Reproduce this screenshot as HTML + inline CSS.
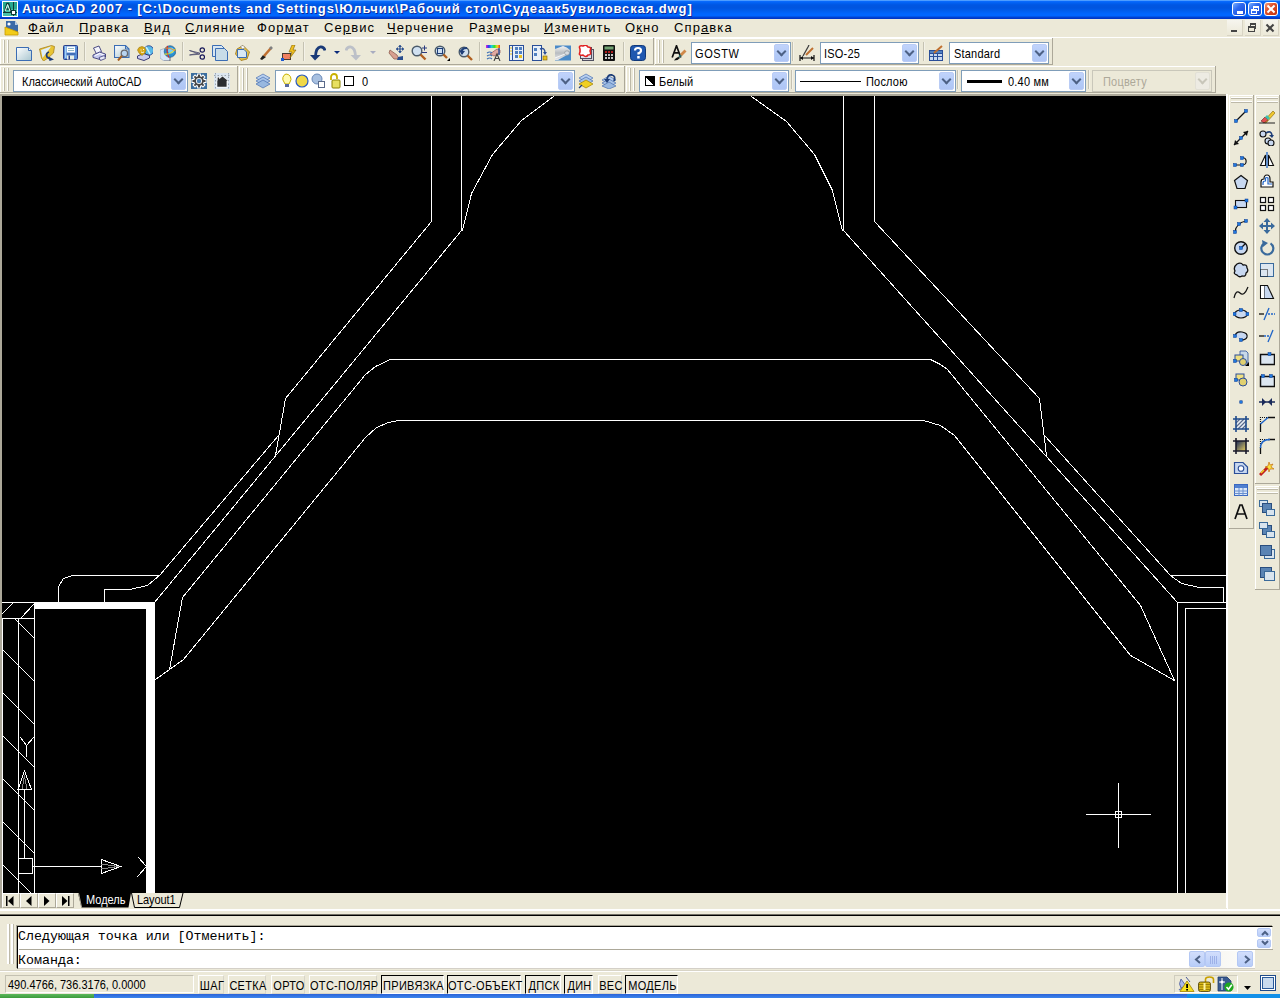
<!DOCTYPE html><html><head><meta charset="utf-8"><style>
*{margin:0;padding:0;box-sizing:border-box}
html,body{width:1280px;height:998px;overflow:hidden;background:#ECE9D8;font-family:"Liberation Sans",sans-serif;font-size:11px;color:#000}
.a{position:absolute}
#title{left:0;top:0;width:1280px;height:19px;background:linear-gradient(#4C9CFF 0,#4C9CFF 1px,#0A6CFF 1px,#0060F2 3px,#0056E2 5px,#0055E0 8px,#005EEE 11px,#0066FF 14px,#0066FF 16px,#0046D6 17px,#0032C2 19px)}
#title .t{left:22px;top:1px;color:#fff;font-weight:bold;font-size:13px;letter-spacing:0.9px;text-shadow:1px 1px 0 #0A2A9C;white-space:nowrap}
.tb{position:absolute;top:2px;width:14px;height:14px;border:1px solid #fff;border-radius:3px;background:linear-gradient(135deg,#7AB0FF 0,#2E6AF0 40%,#1248D8 100%)}
.menu{position:absolute;top:21px;font-size:13px;letter-spacing:1.1px;white-space:nowrap;line-height:13px}
.menu u{text-decoration:underline;text-decoration-thickness:1px;text-underline-offset:1px}
.grip{position:absolute;width:2px;background:#fff;border-right:1px solid #BDB9A8}
.tbar{position:absolute;background:#ECE9D8;border-right:1px solid #ACA899;border-bottom:1px solid #ACA899;box-shadow:inset 1px 1px 0 #fff}
.combo{position:absolute;background:#fff;border:1px solid #7F9DB9;height:22px;white-space:nowrap;overflow:hidden}
.dd{position:absolute;right:1px;top:1px;width:15px;height:18px;border-radius:2px;background:linear-gradient(#C1D3FB,#B2CAF7 60%,#AFC5F5);border:1px solid #B9CCF5}
.dd.dis:after{border-color:#C8C6BA}
.dd:after{content:"";position:absolute;left:3px;top:3px;width:5px;height:5px;border-right:2px solid #4D6185;border-bottom:2px solid #4D6185;transform:rotate(45deg)}
.combo .tx{position:absolute;left:5px;top:4px;font-size:11px;letter-spacing:0.2px;transform:scaleY(1.12);transform-origin:0 0}
.sep{position:absolute;width:2px;border-left:1px solid #C5C2B2;border-right:1px solid #F4F2E8}
.ic{position:absolute;width:16px;height:16px;overflow:visible}
.st{position:absolute;top:976px;height:18px;font-size:12px;line-height:17px;padding:0 2px;white-space:nowrap;letter-spacing:0.1px}
.st.dn{border-top:1px solid #ACA899;border-left:1px solid #ACA899;border-right:1px solid #fff;border-bottom:1px solid #fff;box-shadow:inset 1px 1px 0 #716F64}
</style></head><body>
<div id="title" class="a"><div class="a t">AutoCAD 2007 - [C:\Documents and Settings\Юльчик\Рабочий стол\Судеаак5увиловская.dwg]</div></div>
<svg class="a" style="left:2px;top:1px" width="16" height="16" viewBox="0 0 16 16">
<rect x="0" y="0" width="16" height="16" fill="#fff"/><rect x="1" y="1" width="14" height="14" fill="#28A890"/>
<rect x="1" y="8" width="14" height="7" fill="#48C0A8"/>
<path d="M2.5 11 L5 2.5 L6.5 2.5 L9 11 M3.5 8 H8" stroke="#0E3A34" stroke-width="1.4" fill="none"/><path d="M3.2 10 L5.6 3.5 L8 10" stroke="#E8FFF8" stroke-width="1" fill="none"/>
<path d="M11.5 1 V15 M1 11.5 H15" stroke="#0E3A34" stroke-width="1"/>
<rect x="9.5" y="9.5" width="4" height="4" fill="#fff" stroke="#0E3A34" stroke-width="1"/></svg>
<div class="tb" style="left:1232px"><div class="a" style="left:4px;top:8px;width:6px;height:3px;background:#fff"></div></div>
<div class="tb" style="left:1248px"><div class="a" style="left:4px;top:3px;width:6px;height:5px;border:1px solid #fff;border-top-width:2px"></div><div class="a" style="left:2px;top:6px;width:6px;height:5px;border:1px solid #fff;border-top-width:2px;background:#2E6AF0"></div></div>
<div class="tb" style="left:1264px;background:linear-gradient(135deg,#F09A7A 0,#E0502A 40%,#C0300C 100%)"><div class="a" style="left:1px;top:5px;width:10px;height:2px;background:#fff;transform:rotate(45deg)"></div><div class="a" style="left:1px;top:5px;width:10px;height:2px;background:#fff;transform:rotate(-45deg)"></div></div>
<div class="menu" style="left:28px"><u>Ф</u>айл</div>
<div class="menu" style="left:79px"><u>П</u>равка</div>
<div class="menu" style="left:144px"><u>В</u>ид</div>
<div class="menu" style="left:185px"><u>С</u>лияние</div>
<div class="menu" style="left:257px">Фор<u>м</u>ат</div>
<div class="menu" style="left:324px">Се<u>р</u>вис</div>
<div class="menu" style="left:387px"><u>Ч</u>ерчение</div>
<div class="menu" style="left:469px">Ра<u>з</u>меры</div>
<div class="menu" style="left:544px"><u>И</u>зменить</div>
<div class="menu" style="left:625px">О<u>к</u>но</div>
<div class="menu" style="left:674px">Спр<u>а</u>вка</div>
<svg class="a" style="left:4px;top:20px" width="16" height="16" viewBox="0 0 16 16">
<path d="M2 1h9l3 4v9H2z" fill="#3A6AA8"/><path d="M11 1l3 4h-3z" fill="#B8CCE4"/>
<circle cx="5" cy="4" r="1.6" fill="#fff"/><path d="M1 7 L14 12 V15 H1z" fill="#F2CC1A" stroke="#C89A00" stroke-width="0.8"/></svg>
<div class="a" style="left:1227px;top:20px;width:16px;height:16px;background:linear-gradient(#F6F5EE,#ECE9D8);border-right:1px solid #D8D4C4;border-bottom:1px solid #D8D4C4"></div>
<div class="a" style="left:1245px;top:20px;width:16px;height:16px;background:linear-gradient(#F6F5EE,#ECE9D8);border-right:1px solid #D8D4C4;border-bottom:1px solid #D8D4C4"></div>
<div class="a" style="left:1263px;top:20px;width:16px;height:16px;background:linear-gradient(#F6F5EE,#ECE9D8);border-right:1px solid #D8D4C4;border-bottom:1px solid #D8D4C4"></div>
<div class="a" style="left:1231px;top:30px;width:6px;height:2px;background:#444"></div>
<div class="a" style="left:1250px;top:23px;width:6px;height:6px;border:1px solid #444;border-top-width:2px"></div><div class="a" style="left:1248px;top:26px;width:7px;height:6px;border:1px solid #444;border-top-width:2px;background:#ECE9D8"></div>
<div class="a" style="left:1265px;top:27px;width:10px;height:2px;background:#444;transform:rotate(45deg)"></div><div class="a" style="left:1265px;top:27px;width:10px;height:2px;background:#444;transform:rotate(-45deg)"></div>
<div class="a" style="left:0;top:37px;width:1280px;height:1px;background:#fff"></div>
<div class="tbar" style="left:0px;top:38px;width:654px;height:27px"></div>
<div class="grip" style="left:3px;top:40px;height:23px"></div><div class="grip" style="left:7px;top:40px;height:23px"></div>
<div class="tbar" style="left:655px;top:38px;width:398px;height:27px"></div>
<div class="grip" style="left:658px;top:40px;height:23px"></div><div class="grip" style="left:662px;top:40px;height:23px"></div>
<div class="sep" style="left:84px;top:42px;height:19px"></div>
<div class="sep" style="left:182px;top:42px;height:19px"></div>
<div class="sep" style="left:303px;top:42px;height:19px"></div>
<div class="sep" style="left:479px;top:42px;height:19px"></div>
<div class="sep" style="left:623px;top:42px;height:19px"></div>
<div class="sep" style="left:792px;top:42px;height:19px"></div>
<div class="sep" style="left:923px;top:42px;height:19px"></div>
<div class="combo" style="left:691px;top:42px;width:100px"><div class="tx" style="left:3px;letter-spacing:0.6px">GOSTW</div><div class="dd"></div></div>
<div class="combo" style="left:820px;top:42px;width:99px"><div class="tx" style="left:3px">ISO-25</div><div class="dd"></div></div>
<div class="combo" style="left:949px;top:42px;width:100px"><div class="tx" style="left:4px">Standard</div><div class="dd"></div></div>
<div class="tbar" style="left:0px;top:66px;width:238px;height:27px"></div>
<div class="grip" style="left:3px;top:68px;height:23px"></div><div class="grip" style="left:7px;top:68px;height:23px"></div>
<div class="tbar" style="left:239px;top:66px;width:386px;height:27px"></div>
<div class="grip" style="left:242px;top:68px;height:23px"></div><div class="grip" style="left:246px;top:68px;height:23px"></div>
<div class="tbar" style="left:626px;top:66px;width:590px;height:27px"></div>
<div class="grip" style="left:629px;top:68px;height:23px"></div><div class="grip" style="left:633px;top:68px;height:23px"></div>
<div class="sep" style="left:791px;top:70px;height:19px"></div>
<div class="sep" style="left:957px;top:70px;height:19px"></div>
<div class="sep" style="left:1088px;top:70px;height:19px"></div>
<div class="combo" style="left:13px;top:70px;width:175px"><div class="tx" style="left:8px;letter-spacing:0">Классический AutoCAD</div><div class="dd"></div></div>
<div class="combo" style="left:275px;top:70px;width:300px"><div class="tx" style="left:86px">0</div><div class="dd"></div></div>
<div class="combo" style="left:639px;top:70px;width:150px"><div class="a" style="left:5px;top:5px;width:10px;height:10px;border:1px solid #000;background:linear-gradient(45deg,#fff 50%,#000 50%)"></div><div class="tx" style="left:19px">Белый</div><div class="dd"></div></div>
<div class="combo" style="left:795px;top:70px;width:161px"><div class="a" style="left:4px;top:10px;width:61px;height:1px;background:#000"></div><div class="tx" style="left:70px">Послою</div><div class="dd"></div></div>
<div class="combo" style="left:961px;top:70px;width:125px"><div class="a" style="left:5px;top:9px;width:35px;height:3px;background:#000"></div><div class="tx" style="left:46px">0.40 мм</div><div class="dd"></div></div>
<div class="combo" style="left:1092px;top:70px;width:120px;background:#ECE9D8;border-color:#C9C7BA"><div class="tx" style="left:10px;color:#ACA899">Поцвету</div><div class="dd dis" style="background:#EDEBE3;border-color:#E2E0D6"></div></div>
<div class="a" style="left:0;top:94px;width:1228px;height:2px;background:#ACA899"></div>
<div class="a" style="left:0;top:94px;width:2px;height:814px;background:#ACA899"></div>
<div class="a" style="left:2px;top:96px;width:1224px;height:797px;background:#000"></div>
<div class="a" style="left:1226px;top:94px;width:2px;height:814px;background:#fff"></div>
<svg class="a" style="left:0;top:0" width="1280" height="998" viewBox="0 0 1280 998"><defs><clipPath id="dc"><rect x="2" y="96" width="1224" height="797"/></clipPath></defs><g clip-path="url(#dc)" fill="none" stroke="#fff" stroke-width="1" stroke-linecap="square" shape-rendering="crispEdges"><polyline points="431.5,96.5 431.5,221.5 285.5,398.5 275.5,455.5"/><polyline points="461.5,96.5 461.5,230.5 154.5,602.5"/><polyline points="553.5,96.5 521.5,120.5 492.5,154.5 471.5,193.5 462.5,230.5"/><polyline points="278.5,435.5 159.5,575.5 72.5,575.5 63.5,578.5 58.5,586.5 58.5,602.5"/><polyline points="159.5,575.5 147.5,585.5 129.5,589.5 104.5,589.5 104.5,602.5"/><polyline points="930.5,359.5 390.5,359.5 375.5,366.5 365.5,374.5 182.5,597.5 169.5,669.5 155.5,679.5"/><polyline points="923.5,420.5 398.5,420.5 388.5,422.5 376.5,427.5 365.5,437.5 183.5,659.5 169.5,669.5"/><polyline points="874.5,96.5 874.5,221.5 1039.5,398.5 1046.5,455.5"/><polyline points="843.5,96.5 843.5,230.5 1177.5,602.5"/><polyline points="751.5,96.5 786.5,121.5 814.5,154.5 832.5,190.5 842.5,230.5"/><polyline points="1044.5,435.5 1170.5,575.5 1226.5,575.5"/><polyline points="1170.5,575.5 1181.5,583.5 1199.5,587.5 1223.5,587.5 1223.5,602.5"/><polyline points="930.5,359.5 940.5,364.5 947.5,369.5 1140.5,605.5 1174.5,680.5"/><polyline points="923.5,420.5 940.5,425.5 954.5,435.5 1130.5,655.5 1174.5,680.5"/><polyline points="1226.5,602.5 1177.5,602.5 1177.5,893.5"/><polyline points="1226.5,608.5 1185.5,608.5 1185.5,893.5"/><polyline points="2.5,602.5 146.5,602.5"/><polyline points="2.5,618.5 34.5,618.5"/><polyline points="2.5,618.5 2.5,893.5"/><polyline points="18.5,618.5 18.5,893.5"/><polyline points="34.5,602.5 34.5,893.5"/><polyline points="2.5,613.5 13.5,602.5"/><polyline points="20.5,618.5 33.5,604.5"/><polyline points="14.5,618.5 34.5,638.5"/><polyline points="2.5,649.5 34.5,681.5"/><polyline points="2.5,692.5 34.5,724.5"/><polyline points="2.5,735.5 34.5,767.5"/><polyline points="2.5,778.5 34.5,810.5"/><polyline points="2.5,821.5 34.5,853.5"/><polyline points="2.5,864.5 31.5,893.5"/><rect x="18.5" y="858.5" width="14" height="15"/><polyline points="24.5,858.5 24.5,789.5"/><path d="M18 789.5 L24.5 771 L31.5 789.5 Z" fill="#000"/><path d="M22 789 L24.5 776 M27 789 L24.5 776" stroke="#888" /><polyline points="32.5,866.5 101.5,866.5"/><path d="M101.5 859.5 L120.5 866.5 L101.5 873.5 Z" fill="#000"/><path d="M101 864 L118 866.5 M101 869 L118 866.5" stroke="#888"/><polyline points="20.5,737.5 26.5,745.5 33.5,737.5"/><polyline points="26.5,745.5 26.5,756.5"/><polyline points="138.5,857.5 146.5,866.5"/><polyline points="137.5,876.5 146.5,866.5"/><polyline points="1086.5,814.5 1150.5,814.5"/><polyline points="1118.5,783.5 1118.5,847.5"/><rect x="1115.5" y="811.5" width="6" height="6" fill="#000"/><path d="M1118.5 812 V817 M1116 814.5 H1121" stroke="#fff" stroke-width="1"/><rect x="34" y="602" width="120" height="7" fill="#fff" stroke="none"/><rect x="146" y="602" width="9" height="291" fill="#fff" stroke="none"/></g></svg>
<div class="tbar" style="left:1229px;top:95px;width:25px;height:434px"></div>
<div class="a" style="left:1231px;top:97px;width:21px;height:2px;background:#fff;border-bottom:1px solid #BDB9A8"></div><div class="a" style="left:1231px;top:101px;width:21px;height:2px;background:#fff;border-bottom:1px solid #BDB9A8"></div>
<div class="tbar" style="left:1255px;top:95px;width:25px;height:389px"></div>
<div class="a" style="left:1257px;top:97px;width:21px;height:2px;background:#fff;border-bottom:1px solid #BDB9A8"></div><div class="a" style="left:1257px;top:101px;width:21px;height:2px;background:#fff;border-bottom:1px solid #BDB9A8"></div>
<div class="tbar" style="left:1255px;top:486px;width:25px;height:104px"></div>
<div class="a" style="left:1257px;top:488px;width:21px;height:2px;background:#fff;border-bottom:1px solid #BDB9A8"></div><div class="a" style="left:1257px;top:492px;width:21px;height:2px;background:#fff;border-bottom:1px solid #BDB9A8"></div>
<div class="a" style="left:2px;top:893px;width:18px;height:15px;background:#ECE9D8;border-left:1px solid #fff;border-top:1px solid #fff;border-right:1px solid #ACA899;border-bottom:1px solid #ACA899"></div>
<div class="a" style="left:20px;top:893px;width:18px;height:15px;background:#ECE9D8;border-left:1px solid #fff;border-top:1px solid #fff;border-right:1px solid #ACA899;border-bottom:1px solid #ACA899"></div>
<div class="a" style="left:38px;top:893px;width:18px;height:15px;background:#ECE9D8;border-left:1px solid #fff;border-top:1px solid #fff;border-right:1px solid #ACA899;border-bottom:1px solid #ACA899"></div>
<div class="a" style="left:56px;top:893px;width:18px;height:15px;background:#ECE9D8;border-left:1px solid #fff;border-top:1px solid #fff;border-right:1px solid #ACA899;border-bottom:1px solid #ACA899"></div>
<svg class="a" style="left:0;top:893px" width="200" height="16" viewBox="0 0 200 16">
<rect x="6" y="3" width="1.5" height="10" fill="#000"/><path d="M13.5 3 V13 L8 8z" fill="#000"/>
<path d="M31.5 3 V13 L26 8z" fill="#000"/>
<path d="M44 3 V13 L49.5 8z" fill="#000"/>
<path d="M62 3 V13 L67.5 8z" fill="#000"/><rect x="68" y="3" width="1.5" height="10" fill="#000"/>
<path d="M78 0 L81.5 14.5 L128.5 14.5 L131 0z" fill="#000"/>
<path d="M78.5 0 L81.5 14" stroke="#ACA899" fill="none"/>
<path d="M131.5 0 L134.5 14.5 L179.5 14.5 L183 0" stroke="#000" fill="#ECE9D8"/>

</svg>
<div class="a" style="left:86px;top:893px;color:#fff;font-size:11px;letter-spacing:0px;transform:scaleY(1.12);transform-origin:0 0">Модель</div>
<div class="a" style="left:137px;top:893px;color:#000;font-size:11px;letter-spacing:-0.1px;transform:scaleY(1.12);transform-origin:0 0">Layout1</div>
<div class="a" style="left:1227px;top:893px;width:1px;height:16px;background:#fff"></div>
<div class="a" style="left:0;top:909px;width:1280px;height:2px;background:#fff"></div>
<div class="a" style="left:0;top:915px;width:1280px;height:1px;background:#000"></div>
<div class="a" style="left:0;top:914px;width:1280px;height:1px;background:#716F64"></div>
<div class="grip" style="left:7px;top:924px;height:40px;width:3px"></div><div class="grip" style="left:11px;top:924px;height:40px;width:3px"></div>
<div class="a" style="left:17px;top:926px;width:1256px;height:43px;background:#fff;border-left:1px solid #000;border-top:1px solid #000;border-right:1px solid #ECE9D8;border-bottom:1px solid #D4D0C8;box-shadow:-1px -1px 0 #A8A596"></div>
<div class="a" style="left:19px;top:949px;width:1254px;height:1px;background:#ACA899"></div>
<div class="a" style="left:1255px;top:950px;width:19px;height:20px;background:#ECE9D8"></div>
<div class="a" style="left:18px;top:929px;font-family:'Liberation Mono',monospace;font-size:13.3px;white-space:pre">Следующая точка или [Отменить]:</div>
<div class="a" style="left:18px;top:953px;font-family:'Liberation Mono',monospace;font-size:13.3px;white-space:pre">Команда:</div>
<div class="a" style="left:1257px;top:928px;width:14px;height:9px;border-radius:2px;background:linear-gradient(#D2DEFC,#B8CDF8);border:1px solid #B4C8F4"><svg class="a" style="left:3px;top:1px" width="8" height="6"><path d="M1 5L4 2L7 5" stroke="#4D6185" stroke-width="2" fill="none"/></svg></div>
<div class="a" style="left:1257px;top:939px;width:14px;height:9px;border-radius:2px;background:linear-gradient(#D2DEFC,#B8CDF8);border:1px solid #B4C8F4"><svg class="a" style="left:3px;top:0px" width="8" height="6"><path d="M1 1L4 4L7 1" stroke="#4D6185" stroke-width="2" fill="none"/></svg></div>
<div class="a" style="left:1189px;top:951px;width:66px;height:17px;background:linear-gradient(90deg,#F3F1EC,#FEFEFB)"></div>
<div class="a" style="left:1189px;top:951px;width:16px;height:16px;border-radius:2px;background:linear-gradient(#D2DEFC,#B8CDF8);border:1px solid #B4C8F4"><svg class="a" style="left:4px;top:3px" width="8" height="9"><path d="M6 1L2 4.5L6 8" stroke="#4D6185" stroke-width="2" fill="none"/></svg></div>
<div class="a" style="left:1205px;top:951px;width:16px;height:16px;border-radius:2px;background:linear-gradient(#D2DEFC,#B8CDF8);border:1px solid #B4C8F4"><svg class="a" style="left:4px;top:4px" width="8" height="8"><path d="M0.5 0v8M2.5 0v8M4.5 0v8M6.5 0v8" stroke="#9DB1E8" stroke-width="1"/></svg></div>
<div class="a" style="left:1237px;top:951px;width:16px;height:16px;border-radius:2px;background:linear-gradient(#D2DEFC,#B8CDF8);border:1px solid #B4C8F4"><svg class="a" style="left:5px;top:3px" width="8" height="9"><path d="M2 1L6 4.5L2 8" stroke="#4D6185" stroke-width="2" fill="none"/></svg></div>
<div class="a" style="left:0;top:970px;width:1280px;height:1px;background:#D8D4C6"></div><div class="a" style="left:0;top:971px;width:1280px;height:1px;background:#fff"></div>
<div class="a" style="left:5px;top:975px;width:189px;height:18px;border:1px solid #C4C1B2;border-right-color:#fff;border-bottom-color:#fff"></div>
<div class="a" style="left:8px;top:977px;font-size:11px;letter-spacing:0px;white-space:nowrap;transform:scaleY(1.15);transform-origin:0 0">490.4766, 736.3176, 0.0000</div>
<div class="a" style="left:198px;top:975px;width:26px;height:19px;border:1px solid #D8D5C8;border-left-color:#fff;border-top-color:#fff;background:#ECE9D8"></div>
<div class="a" style="left:199px;top:978px;width:26px;text-align:center;font-size:11px;letter-spacing:0.3px;white-space:nowrap;transform:scaleY(1.2);transform-origin:0 0">ШАГ</div>
<div class="a" style="left:228px;top:975px;width:38px;height:19px;border:1px solid #D8D5C8;border-left-color:#fff;border-top-color:#fff;background:#ECE9D8"></div>
<div class="a" style="left:229px;top:978px;width:38px;text-align:center;font-size:11px;letter-spacing:0.3px;white-space:nowrap;transform:scaleY(1.2);transform-origin:0 0">СЕТКА</div>
<div class="a" style="left:271px;top:975px;width:34px;height:19px;border:1px solid #D8D5C8;border-left-color:#fff;border-top-color:#fff;background:#ECE9D8"></div>
<div class="a" style="left:272px;top:978px;width:34px;text-align:center;font-size:11px;letter-spacing:0.3px;white-space:nowrap;transform:scaleY(1.2);transform-origin:0 0">ОРТО</div>
<div class="a" style="left:309px;top:975px;width:68px;height:19px;border:1px solid #D8D5C8;border-left-color:#fff;border-top-color:#fff;background:#ECE9D8"></div>
<div class="a" style="left:310px;top:978px;width:68px;text-align:center;font-size:11px;letter-spacing:0.3px;white-space:nowrap;transform:scaleY(1.2);transform-origin:0 0">ОТС-ПОЛЯР</div>
<div class="a" style="left:381px;top:975px;width:63px;height:19px;border-left:1px solid #000;border-top:1px solid #000;border-right:1px solid #fff;border-bottom:1px solid #fff;background:#EEEBE0"></div>
<div class="a" style="left:382px;top:978px;width:63px;text-align:center;font-size:11px;letter-spacing:0.3px;white-space:nowrap;transform:scaleY(1.2);transform-origin:0 0">ПРИВЯЗКА</div>
<div class="a" style="left:447px;top:975px;width:74px;height:19px;border-left:1px solid #000;border-top:1px solid #000;border-right:1px solid #fff;border-bottom:1px solid #fff;background:#EEEBE0"></div>
<div class="a" style="left:448px;top:978px;width:74px;text-align:center;font-size:11px;letter-spacing:0.3px;white-space:nowrap;transform:scaleY(1.2);transform-origin:0 0">ОТС-ОБЪЕКТ</div>
<div class="a" style="left:525px;top:975px;width:36px;height:19px;border-left:1px solid #000;border-top:1px solid #000;border-right:1px solid #fff;border-bottom:1px solid #fff;background:#EEEBE0"></div>
<div class="a" style="left:526px;top:978px;width:36px;text-align:center;font-size:11px;letter-spacing:0.3px;white-space:nowrap;transform:scaleY(1.2);transform-origin:0 0">ДПСК</div>
<div class="a" style="left:564px;top:975px;width:29px;height:19px;border-left:1px solid #000;border-top:1px solid #000;border-right:1px solid #fff;border-bottom:1px solid #fff;background:#EEEBE0"></div>
<div class="a" style="left:565px;top:978px;width:29px;text-align:center;font-size:11px;letter-spacing:0.3px;white-space:nowrap;transform:scaleY(1.2);transform-origin:0 0">ДИН</div>
<div class="a" style="left:598px;top:975px;width:24px;height:19px;border:1px solid #D8D5C8;border-left-color:#fff;border-top-color:#fff;background:#ECE9D8"></div>
<div class="a" style="left:599px;top:978px;width:24px;text-align:center;font-size:11px;letter-spacing:0.3px;white-space:nowrap;transform:scaleY(1.2);transform-origin:0 0">ВЕС</div>
<div class="a" style="left:625px;top:975px;width:53px;height:19px;border-left:1px solid #000;border-top:1px solid #000;border-right:1px solid #fff;border-bottom:1px solid #fff;background:#EEEBE0"></div>
<div class="a" style="left:626px;top:978px;width:53px;text-align:center;font-size:11px;letter-spacing:0.3px;white-space:nowrap;transform:scaleY(1.2);transform-origin:0 0">МОДЕЛЬ</div>
<div class="a" style="left:1174px;top:975px;width:64px;height:18px;border:1px solid #D0CDBE;border-right-color:#fff;border-bottom-color:#fff"></div>
<svg class="a" style="left:1170px;top:972px" width="110" height="22" viewBox="1170 972 110 22">
<path d="M1181 979 Q1178 984 1181 988 L1186 986 Z" fill="#A8B8E8" stroke="#4A5A98" stroke-width="0.8"/><path d="M1179 990 L1184 987" stroke="#6070B0" stroke-width="1.4"/><path d="M1186 977 L1190 982" stroke="#4A5A98" stroke-width="1"/>
<path d="M1187 981 L1194 991.5 L1180 991.5 Z" fill="#F6E020" stroke="#A08000" stroke-width="0.8"/><rect x="1186.2" y="984" width="1.8" height="4" fill="#000"/><rect x="1186.2" y="989" width="1.8" height="1.5" fill="#000"/>
<path d="M1205.5 983 V979.5 Q1205.5 977 1209.5 977 Q1213.5 977 1213.5 979.5 V983" stroke="#C8A000" stroke-width="1.6" fill="none"/>
<rect x="1198.5" y="982" width="12" height="9.5" rx="2" fill="#D8B818" stroke="#4A3A00" stroke-width="0.8"/><path d="M1199 984.5 H1210 M1199 987 H1210 M1199 989.5 H1210" stroke="#8A7000" stroke-width="0.8"/><rect x="1203.5" y="983" width="2" height="7" fill="#FFF4A0"/>
<path d="M1218 977 H1227 L1231 981 V991 H1218 Z" fill="#3A5A90" stroke="#1E3A6A" stroke-width="0.8"/><path d="M1222 978 V990 M1219 982 H1225" stroke="#fff" stroke-width="1"/><circle cx="1222" cy="982" r="1.5" fill="#fff"/>
<circle cx="1229" cy="987" r="4.6" fill="#1EA81E"/><path d="M1226.5 987 L1228.5 989.2 L1231.8 984.8" stroke="#fff" stroke-width="1.6" fill="none"/>
<path d="M1244 986 L1251 986 L1247.5 990 Z" fill="#000"/>
<rect x="1260.5" y="975.5" width="15" height="15" fill="#fff" stroke="#1E4A8A"/><rect x="1262.5" y="977.5" width="11" height="11" fill="#C8DAEE" stroke="#2A5A9A"/>
</svg>
<div class="a" style="left:0;top:994px;width:1280px;height:4px;background:linear-gradient(#2A62D8,#3C86EC)"></div>
<div class="a" style="left:0;top:994px;width:94px;height:4px;background:linear-gradient(#5CB85C,#3C9A3C)"></div>
<div class="a" style="left:1187px;top:994px;width:93px;height:4px;background:#1290E8"></div>
<svg class="a" style="left:16px;top:45px" width="16" height="16" viewBox="0 0 16 16"><defs><linearGradient id="gN" x1="0" y1="0" x2="1" y2="1"><stop offset="0" stop-color="#fff"/><stop offset="1" stop-color="#A9C6D0"/></linearGradient></defs><path d="M0.5 2.5 H12.5 L15.5 5.5 V15.5 H0.5 Z" fill="url(#gN)" stroke="#3B6DB4"/><path d="M12.5 2.5 V5.5 H15.5" fill="#fff" stroke="#3B6DB4"/></svg>
<svg class="a" style="left:39px;top:45px" width="16" height="16" viewBox="0 0 16 16"><path d="M0.5 4 L12.5 0.5 L15.5 1.5 L14.5 8 L9 13 L4.5 16 L2.5 13z" fill="#E6BC30" stroke="#A88420" stroke-width="0.8"/><path d="M2 5 L12.5 1.2 L6 12 L3.5 13z" fill="#DDEEFA"/><path d="M3.5 13 L12.5 1.2 L14.5 2 L13.5 8 L9 12.5 L4.5 15.5z" fill="#E8C434"/><path d="M10 7 Q6.5 8 8 12 L11 14" stroke="#1A3A78" stroke-width="1.8" fill="none"/><path d="M9.5 11.5 L15 14.5 L10.5 16z" fill="#1A3A78"/></svg>
<svg class="a" style="left:63px;top:45px" width="16" height="16" viewBox="0 0 16 16"><rect x="0.5" y="0.5" width="14" height="14" rx="1" fill="#5A90D8" stroke="#2A3E88"/><rect x="2" y="1" width="1.5" height="12" fill="#A8D0F4"/><rect x="4" y="1.5" width="8" height="6" fill="#fff"/><path d="M5 3.5h6M5 5.5h6" stroke="#90B8C8"/><rect x="3.5" y="8.5" width="9" height="1" fill="#2A4E98"/><rect x="4" y="10.5" width="7" height="4" fill="#E8F0E8"/><rect x="5.5" y="10.5" width="1.5" height="4" fill="#2A3E88"/></svg>
<svg class="a" style="left:91px;top:45px" width="16" height="16" viewBox="0 0 16 16"><path d="M2.5 3 L8 1 L10.5 6.5 L5.5 9z" fill="#F4F4FA" stroke="#3A3A78" stroke-width="0.9"/><path d="M2 10 L8.5 7 L14.5 9 L14.5 12 L9 14.5 L2 12.5z" fill="#C8CCF0" stroke="#3A3A78" stroke-width="0.9"/><path d="M4 10.5 L9 8.5 L13 10" stroke="#fff" stroke-width="1" fill="none"/><path d="M8 12.5 L13.5 10.5 L14.5 13.5 L9.5 15.5z" fill="#E8EAF8" stroke="#3A3A78" stroke-width="0.8"/></svg>
<svg class="a" style="left:114px;top:45px" width="16" height="16" viewBox="0 0 16 16"><defs><linearGradient id="gP" x1="0" y1="0" x2="1" y2="1"><stop offset="0" stop-color="#fff"/><stop offset="1" stop-color="#A9C6D0"/></linearGradient></defs><path d="M0.5 0.5 H11.5 L15 4 V12.5 H0.5 Z" fill="url(#gP)" stroke="#3B6DB4" stroke-width="1.1"/><path d="M11.5 0.5 V4 H15" fill="none" stroke="#3B6DB4"/><circle cx="10.4" cy="8.4" r="3.2" fill="#B8D4F0" stroke="#6A6A70" stroke-width="1.3"/><path d="M7.8 11 L4 15.5" stroke="#A86020" stroke-width="2"/></svg>
<svg class="a" style="left:137px;top:45px" width="16" height="16" viewBox="0 0 16 16"><circle cx="11.8" cy="5.5" r="4.8" fill="#58B8E8" stroke="#2A3A88" stroke-width="0.8"/><path d="M9 2 Q11 5 13 9" stroke="#C8F0FF" stroke-width="1.5" fill="none"/><path d="M0.5 11 L6.5 8.5 L12.5 10.5 L12.5 13 L7 15.5 L0.5 13.5z" fill="#C8CCF0" stroke="#2A2A68" stroke-width="0.9"/><path d="M5 1.5 L7.5 2.5 L9 5 L8 8 L5 10.5 L2 8 L0.5 5 L2 2.5z" fill="#D8A818" stroke="#A07800" stroke-width="0.6"/><path d="M3.5 5 h1 M6 4.5 h1 M4 7 q1.5 1 3 0" stroke="#fff" stroke-width="0.9" fill="none"/></svg>
<svg class="a" style="left:160px;top:45px" width="16" height="16" viewBox="0 0 16 16"><path d="M0 5 L6 3 L10 5 L10 16 L4 16 L0 13z" fill="#D8E6F6" stroke="#90A0B8" stroke-width="0.6"/><path d="M4 16 L10 16 L10 5" fill="none" stroke="#6A6A70" stroke-width="0.8"/><circle cx="10" cy="6.5" r="5.8" fill="#2A90D0" stroke="#1A4A80" stroke-width="0.6"/><circle cx="11" cy="5.5" r="3" fill="#7ACCF0"/><path d="M7.5 1 Q6 7 9 12.5" stroke="#E02020" stroke-width="1.1" fill="none"/><path d="M4.5 9 Q10 10 15.5 4" stroke="#E8E020" stroke-width="1.1" fill="none"/><path d="M5 3 Q10 2 15.5 6" stroke="#F09030" stroke-width="1" fill="none"/></svg>
<svg class="a" style="left:189px;top:45px" width="16" height="16" viewBox="0 0 16 16"><path d="M0.5 5.5 L10.5 8 L10 9 Z" fill="#F0F0F8" stroke="#4A4A6A" stroke-width="0.8"/><path d="M0.5 10 L10.5 8 L10.5 9.3 Z" fill="#D8D8E8" stroke="#4A4A6A" stroke-width="0.8"/><circle cx="13.3" cy="5" r="2.2" fill="none" stroke="#1A1A5A" stroke-width="1.2"/><circle cx="13.3" cy="12" r="2.2" fill="none" stroke="#1A1A5A" stroke-width="1.2"/></svg>
<svg class="a" style="left:212px;top:45px" width="16" height="16" viewBox="0 0 16 16"><path d="M0.5 0.5 H9.5 L12.5 3.5 V11.5 H0.5 Z" fill="#D8E6F0" stroke="#3B6DB4"/><path d="M3.5 3.5 H12.5 L15.5 6.5 V15.5 H3.5 Z" fill="#C8DCE8" stroke="#3B6DB4"/></svg>
<svg class="a" style="left:235px;top:45px" width="16" height="16" viewBox="0 0 16 16"><path d="M2 4 L8 0.5 L14.5 7 L12 14 L6 15.5 L0.5 9z" fill="#E0C050" stroke="#A88020" stroke-width="0.9"/><path d="M5.5 1.5 L8 0.5 L10 2.5 L7.5 4z" fill="#fff" stroke="#808080" stroke-width="0.6"/><path d="M2.5 4.5 H9 L11.5 7 V12.5 H2.5z" fill="#D8E8F4" stroke="#3B6DB4"/></svg>
<svg class="a" style="left:258px;top:45px" width="16" height="16" viewBox="0 0 16 16"><path d="M2 14 L5 10 L8 12 L4 15z" fill="#202020"/><path d="M6 11 L13 3" stroke="#C07030" stroke-width="2.6"/><path d="M12 4 L14 2" stroke="#808080" stroke-width="2.6"/></svg>
<svg class="a" style="left:281px;top:45px" width="16" height="16" viewBox="0 0 16 16"><rect x="1.5" y="8.5" width="8" height="6" fill="#F08060" stroke="#4A3A30"/><rect x="0" y="13" width="3" height="3" fill="#1E5AD0"/><path d="M11 0 L8 7 L11 7 L9 13 L15 5 L12 5 L14 0z" fill="#F0C020" stroke="#806000" stroke-width="0.6"/></svg>
<svg class="a" style="left:310px;top:45px" width="16" height="16" viewBox="0 0 16 16"><path d="M15 5.5 Q14 1.5 10.5 1.8 Q6 2.5 5.5 11" stroke="#1A3A78" stroke-width="2.8" fill="none"/><path d="M0 10 L10.5 10 L5 15.5z" fill="#1A3A78"/></svg>
<svg class="a" style="left:329px;top:45px" width="16" height="16" viewBox="0 0 16 16"><path d="M5 6 L11 6 L8 9z" fill="#0A2A7A"/></svg>
<svg class="a" style="left:345px;top:45px" width="16" height="16" viewBox="0 0 16 16"><path d="M1 5.5 Q2 1.5 5.5 1.8 Q10 2.5 10.5 11" stroke="#BCC0C8" stroke-width="2.8" fill="none"/><path d="M16 10 L5.5 10 L11 15.5z" fill="#BCC0C8"/></svg>
<svg class="a" style="left:365px;top:45px" width="16" height="16" viewBox="0 0 16 16"><path d="M5 6 L11 6 L8 9z" fill="#A8ACC0"/></svg>
<svg class="a" style="left:388px;top:45px" width="16" height="16" viewBox="0 0 16 16"><path d="M2 5 L9 10 L11 14 L6 14 L1 8z" fill="#D8A090" stroke="#906050" stroke-width="0.8"/><path d="M10 12 L15 11 L15 15 L9 15z" fill="#2A4E8E"/><path d="M12 0 V8 M8 4 H16" stroke="#2A4E8E" stroke-width="1.2"/><path d="M12 0 L10 2 H14z M12 8 L10 6 H14z M8 4 L10 2 V6z M16 4 L14 2 V6z" fill="#2A4E8E"/></svg>
<svg class="a" style="left:411px;top:45px" width="16" height="16" viewBox="0 0 16 16"><circle cx="6" cy="6" r="4.8" fill="#D0E0F0" stroke="#4A5A6A" stroke-width="1.4"/><path d="M9.5 9.5 L14.5 14.5" stroke="#B06020" stroke-width="2.4"/><path d="M11 3 H16 M13.5 0.5 V5.5 M11 7.5 H16" stroke="#2A3A80" stroke-width="1"/></svg>
<svg class="a" style="left:434px;top:45px" width="16" height="16" viewBox="0 0 16 16"><circle cx="6" cy="6" r="4.8" fill="#D0E0F0" stroke="#4A5A6A" stroke-width="1.4"/><rect x="3.5" y="3.5" width="5" height="5" fill="none" stroke="#1E3E78"/><path d="M9.5 9.5 L13 13" stroke="#B06020" stroke-width="2.4"/><path d="M13 16 L16 13 L16 16z" fill="#000"/></svg>
<svg class="a" style="left:457px;top:45px" width="16" height="16" viewBox="0 0 16 16"><circle cx="7" cy="7" r="4.8" fill="#D0E0F0" stroke="#4A5A6A" stroke-width="1.4"/><path d="M10.5 10.5 L15 15" stroke="#B06020" stroke-width="2.4"/><path d="M5 9 Q3 3 10 3" stroke="#1E3E78" stroke-width="2" fill="none"/><path d="M2 5 L5 10 L8 6z" fill="#1E3E78"/></svg>
<svg class="a" style="left:486px;top:45px" width="16" height="16" viewBox="0 0 16 16"><defs><linearGradient id="gR" x1="0" y1="0" x2="1" y2="0"><stop offset="0" stop-color="#E020E0"/><stop offset="0.2" stop-color="#2040F0"/><stop offset="0.4" stop-color="#20D0E0"/><stop offset="0.6" stop-color="#30E030"/><stop offset="0.8" stop-color="#F0E020"/><stop offset="1" stop-color="#F03020"/></linearGradient></defs><rect x="0" y="0" width="14" height="3" fill="url(#gR)"/><path d="M4 9 L11 4 L14 5 L14 8 L8 11z" fill="#E0A8A0" stroke="#905050" stroke-width="0.7"/><path d="M13 3 V10" stroke="#2A4E98" stroke-width="1.4"/><path d="M1 8 Q4 6 6 8 M1 11 Q4 9 6 11 M1 14 Q4 12 6 14" stroke="#3A6EB5" fill="none" stroke-width="1.1"/><path d="M8 16 L11 9 L14 16 M9.5 13.5 H12.5" stroke="#404040" stroke-width="1.1" fill="none"/></svg>
<svg class="a" style="left:509px;top:45px" width="16" height="16" viewBox="0 0 16 16"><rect x="0.5" y="0.5" width="14" height="15" fill="#E8F0F8" stroke="#2A4E98"/><path d="M3.5 1 V15" stroke="#2A4E98"/><rect x="6" y="2" width="3" height="3" fill="#5080C0"/><rect x="10" y="2" width="3" height="3" fill="#5080C0"/><rect x="6" y="6" width="3" height="3" fill="#5080C0"/><rect x="10" y="6" width="3" height="3" fill="#5080C0"/><rect x="6" y="10" width="3" height="3" fill="#5080C0"/><rect x="10" y="10" width="3" height="3" fill="#E8C020"/><path d="M1 3h2M1 6h2M1 9h2" stroke="#E8C020"/></svg>
<svg class="a" style="left:532px;top:45px" width="16" height="16" viewBox="0 0 16 16"><rect x="0.5" y="0.5" width="9" height="15" fill="#E8F0F8" stroke="#2A4E98"/><rect x="2" y="3" width="3" height="3" fill="#5080C0"/><rect x="2" y="8" width="3" height="3" fill="#5080C0"/><path d="M8 4 Q13 2 13 8" stroke="#2A4E98" stroke-width="1.4" fill="none"/><path d="M11 7 L15 7 L13 10z" fill="#2A4E98"/><rect x="11" y="11" width="4" height="4" fill="#E8C020" stroke="#806000" stroke-width="0.6"/></svg>
<svg class="a" style="left:555px;top:45px" width="16" height="16" viewBox="0 0 16 16"><defs><linearGradient id="gS" x1="0" y1="0" x2="0" y2="1"><stop offset="0" stop-color="#F4F4F4"/><stop offset="0.5" stop-color="#B8BCC0"/><stop offset="1" stop-color="#E8E8EA"/></linearGradient></defs><rect x="0" y="0.5" width="16" height="15" fill="#4A8AC8"/><path d="M0 4 L8 1 Q12 2 15 5 Q15 9 12 10 L3 15 L0 15z" fill="url(#gS)"/><ellipse cx="12" cy="8" rx="2.5" ry="2.2" fill="#D8DCE0" stroke="#8A9098" stroke-width="0.7"/><path d="M0 13 L10 9" stroke="#fff" stroke-width="0.8"/></svg>
<svg class="a" style="left:578px;top:45px" width="16" height="16" viewBox="0 0 16 16"><rect x="4.5" y="4.5" width="11" height="11" fill="#D0D0D8" stroke="#505060"/><rect x="2.5" y="2.5" width="11" height="11" fill="#E0E0E8" stroke="#505060"/><path d="M2 4 Q0 0 5 1 Q8 -1 10 2 Q14 2 12 6 Q14 10 10 10 Q8 13 5 10 Q0 11 2 7z" fill="#fff" stroke="#E02020" stroke-width="1.6"/></svg>
<svg class="a" style="left:601px;top:45px" width="16" height="16" viewBox="0 0 16 16"><rect x="2" y="0" width="12" height="16" rx="1" fill="#101010"/><rect x="3.5" y="1.5" width="9" height="3" fill="#70A070"/><path d="M4 7h2M7 7h2M10 7h2" stroke="#E02020" stroke-width="1.5"/><path d="M4 10h2M7 10h2M10 10h2M4 13h2M7 13h2M10 13h2" stroke="#fff" stroke-width="1.5"/></svg>
<svg class="a" style="left:630px;top:45px" width="16" height="16" viewBox="0 0 16 16"><rect x="0.5" y="0.5" width="15" height="15" rx="3" fill="#2058B0" stroke="#103878"/><path d="M5 5.5 Q5 3 8 3 Q11 3 11 5.5 Q11 7.5 8.5 8.2 V9.5" stroke="#fff" stroke-width="2.2" fill="none"/><rect x="7.2" y="11" width="2.5" height="2.5" fill="#fff"/></svg>
<svg class="a" style="left:671px;top:45px" width="16" height="16" viewBox="0 0 16 16"><path d="M1.2 12.5 L5.5 0.8 L9.8 12.5 M3 7.8 H8" stroke="#101010" stroke-width="1.7" fill="none"/><path d="M3 15.5 Q5 12 8 12 L9 13 Q7 15.5 3 15.5z" fill="#101010"/><path d="M8 12 L11 9" stroke="#2A6A6A" stroke-width="1.8"/><path d="M10 10 L14.5 5.5" stroke="#D08848" stroke-width="2.8"/></svg>
<svg class="a" style="left:799px;top:45px" width="16" height="16" viewBox="0 0 16 16"><path d="M1 13 H15 M1 10 V16 M15 10 V16" stroke="#101010" stroke-width="1.2"/><path d="M1 13 L4 11 V15z M15 13 L12 11 V15z" fill="#101010"/><path d="M4 11 L9 2 L10 0" stroke="#404040" stroke-width="1.3"/><path d="M7 10 L14 3" stroke="#C07030" stroke-width="2"/></svg>
<svg class="a" style="left:928px;top:45px" width="16" height="16" viewBox="0 0 16 16"><rect x="1.5" y="5.5" width="13" height="10" fill="#C8D8F0" stroke="#2A4E98"/><path d="M1.5 8.5 H14.5 M1.5 11.5 H14.5 M5.5 5.5 V15.5 M9.5 5.5 V15.5" stroke="#2A4E98"/><rect x="2" y="6" width="12" height="2" fill="#5080C0"/><path d="M6 8 L14 1" stroke="#C07030" stroke-width="2"/></svg>
<svg class="a" style="left:191px;top:73px" width="16" height="16" viewBox="0 0 16 16"><rect x="0" y="0" width="16" height="16" fill="#3C6E9E"/><path d="M8 0.5 V15.5 M0.5 8 H15.5 M2.7 2.7 L13.3 13.3 M13.3 2.7 L2.7 13.3" stroke="#fff" stroke-width="3.8"/><circle cx="8" cy="8" r="6" fill="#fff"/><path d="M8 1.5 V14.5 M1.5 8 H14.5 M3.4 3.4 L12.6 12.6 M12.6 3.4 L3.4 12.6" stroke="#484848" stroke-width="2"/><circle cx="8" cy="8" r="4.8" fill="#484848"/><circle cx="8" cy="8" r="3" fill="#fff"/><circle cx="8" cy="8" r="2.2" fill="#4A7EB0"/></svg>
<svg class="a" style="left:214px;top:73px" width="16" height="16" viewBox="0 0 16 16"><rect x="0" y="0" width="16" height="16" fill="#DCE6F0"/><path d="M1.5 0 V16 M14.5 0 V16 M0 2.5 H16" stroke="#8A949E" stroke-width="0.8" stroke-dasharray="1.5 2"/><path d="M1 8.5 L3 8.5 L3 4 L6 4 L6 5.5 L8.5 3 L15 8.5 L13.5 8.5 L13.5 14.5 L2.5 14.5 L2.5 8.5z" fill="#fff"/><path d="M2.2 7.8 L3.6 7.8 L3.6 4.6 L5.2 4.6 L5.2 6.2 L8.5 3.6 L13.8 7.8 L12.6 7.8 L12.6 13.8 L3.3 13.8 L3.3 7.8z" fill="#2A2C30"/></svg>
<svg class="a" style="left:255px;top:73px" width="16" height="16" viewBox="0 0 16 16"><path d="M1 5 L8 1 L15 5 L8 9z" fill="#B8D0F0" stroke="#4A70B0" stroke-width="0.7"/><path d="M1 8 L8 4 L15 8 L8 12z" fill="#A8C4E8" stroke="#4A70B0" stroke-width="0.7"/><path d="M1 11 L8 7 L15 11 L8 15z" fill="#98B8E0" stroke="#4A70B0" stroke-width="0.7"/></svg>
<svg class="a" style="left:578px;top:73px" width="16" height="16" viewBox="0 0 16 16"><path d="M1 5 L8 1 L15 5 L8 9z" fill="#B8D0F0" stroke="#4A70B0" stroke-width="0.7"/><path d="M1 8 L8 4 L15 8 L8 12z" fill="#A8C4E8" stroke="#4A70B0" stroke-width="0.7"/><path d="M1 11 L8 7 L15 11 L8 15z" fill="#F0D020" stroke="#A08000" stroke-width="0.7"/><path d="M1 15 L4 12" stroke="#1E3E78" stroke-width="1.3"/></svg>
<svg class="a" style="left:601px;top:73px" width="16" height="16" viewBox="0 0 16 16"><path d="M1 7 L8 3 L15 7 L8 11z" fill="#B8D0F0" stroke="#4A70B0" stroke-width="0.7"/><path d="M1 10 L8 6 L15 10 L8 14z" fill="#A8C4E8" stroke="#4A70B0" stroke-width="0.7"/><path d="M1 13 L8 9 L15 13 L8 16z" fill="#98B8E0" stroke="#4A70B0" stroke-width="0.7"/><path d="M6 8 Q6 1 11 2 Q15 3 13 8" stroke="#1E3E78" stroke-width="1.8" fill="none"/><path d="M3 6 L6 10 L9 6z" fill="#1E3E78"/></svg>
<svg class="a" style="left:280px;top:73px" width="84" height="16" viewBox="0 0 84 16">
<path d="M6 1 a5 5 0 0 1 4 8 L9 11 H5 L4 9 a5 5 0 0 1 2 -8z" fill="#FFFAB0" stroke="#C8B000" stroke-width="1"/><rect x="5" y="11" width="4" height="3" fill="#5A6AA0"/>
<circle cx="22" cy="8" r="6" fill="#F0D848" stroke="#2A5AC0" stroke-width="1.2"/>
<circle cx="37" cy="6" r="5" fill="#A8C0E0" stroke="#6A8AB8"/><rect x="38.5" y="8.5" width="6" height="6" fill="#fff" stroke="#5A6A8A"/>
<path d="M51 7 V4 a3 3 0 0 1 6 0 V6" stroke="#C8B000" stroke-width="1.8" fill="none"/><rect x="52" y="7" width="8" height="8" rx="1" fill="#E8E060" stroke="#8A8000"/>
<rect x="64.5" y="3.5" width="9" height="9" fill="#fff" stroke="#000"/>
</svg>
<svg class="a" style="left:1233px;top:108px" width="16" height="16" viewBox="0 0 16 16"><path d="M3 13 L13 3" stroke="#101010" stroke-width="1.3"/><rect x="1.5" y="11.5" width="3" height="3" fill="#1E78E0" stroke="#0A3A90" stroke-width="0.5"/><rect x="11.5" y="1.5" width="3" height="3" fill="#1E78E0" stroke="#0A3A90" stroke-width="0.5"/></svg>
<svg class="a" style="left:1233px;top:130px" width="16" height="16" viewBox="0 0 16 16"><path d="M1 15 L15 1" stroke="#101010" stroke-width="1.3"/><path d="M1 15 L2 10 L6 14z M15 1 L10 2 L14 6z" fill="#101010"/><rect x="6.5" y="6.5" width="3" height="3" fill="#1E78E0" stroke="#0A3A90" stroke-width="0.5"/></svg>
<svg class="a" style="left:1233px;top:152px" width="16" height="16" viewBox="0 0 16 16"><path d="M2 13 H9 Q14 13 13 8 Q12 5 9 6" stroke="#101010" stroke-width="1.2" fill="none"/><rect x="0.5" y="11.5" width="3" height="3" fill="#1E78E0" stroke="#0A3A90" stroke-width="0.5"/><rect x="7.5" y="11.5" width="3" height="3" fill="#1E78E0" stroke="#0A3A90" stroke-width="0.5"/><rect x="7.5" y="4.5" width="3" height="3" fill="#1E78E0" stroke="#0A3A90" stroke-width="0.5"/></svg>
<svg class="a" style="left:1233px;top:174px" width="16" height="16" viewBox="0 0 16 16"><path d="M8 1.5 L14.5 6.5 L12 14.5 H4 L1.5 6.5z" fill="#C8D8F0" stroke="#101010" stroke-width="1.2"/></svg>
<svg class="a" style="left:1233px;top:196px" width="16" height="16" viewBox="0 0 16 16"><rect x="2.5" y="4.5" width="11" height="7" fill="#C8D8F0" stroke="#101010" stroke-width="1.1"/><rect x="1.0" y="10.0" width="3" height="3" fill="#1E78E0" stroke="#0A3A90" stroke-width="0.5"/><rect x="12.0" y="3.0" width="3" height="3" fill="#1E78E0" stroke="#0A3A90" stroke-width="0.5"/></svg>
<svg class="a" style="left:1233px;top:218px" width="16" height="16" viewBox="0 0 16 16"><path d="M2 14 Q3 5 13 3" stroke="#101010" stroke-width="1.2" fill="none"/><rect x="0.5" y="12.5" width="3" height="3" fill="#1E78E0" stroke="#0A3A90" stroke-width="0.5"/><rect x="4.5" y="4.5" width="3" height="3" fill="#1E78E0" stroke="#0A3A90" stroke-width="0.5"/><rect x="11.5" y="1.5" width="3" height="3" fill="#1E78E0" stroke="#0A3A90" stroke-width="0.5"/></svg>
<svg class="a" style="left:1233px;top:240px" width="16" height="16" viewBox="0 0 16 16"><circle cx="8" cy="8" r="6.3" fill="#C8D8F0" stroke="#101010" stroke-width="1.4"/><path d="M8 8 L12 4" stroke="#101010" stroke-width="1.2"/><rect x="6.5" y="6.5" width="3" height="3" fill="#1E78E0" stroke="#0A3A90" stroke-width="0.5"/></svg>
<svg class="a" style="left:1233px;top:262px" width="16" height="16" viewBox="0 0 16 16"><path d="M4 2 Q8 0 10 3 Q14 2 14 6 Q16 9 13 11 Q13 15 9 14 Q6 16 4 13 Q0 12 2 9 Q0 5 4 2z" fill="#C8D8F0" stroke="#101010" stroke-width="1.3"/></svg>
<svg class="a" style="left:1233px;top:284px" width="16" height="16" viewBox="0 0 16 16"><path d="M1 14 Q3 5 7 9 Q11 13 15 3" stroke="#101010" stroke-width="1.2" fill="none"/></svg>
<svg class="a" style="left:1233px;top:306px" width="16" height="16" viewBox="0 0 16 16"><ellipse cx="8" cy="8" rx="6.5" ry="4" fill="#C8D8F0" stroke="#101010" stroke-width="1.2"/><rect x="0.0" y="6.5" width="3" height="3" fill="#1E78E0" stroke="#0A3A90" stroke-width="0.5"/><rect x="13.0" y="6.5" width="3" height="3" fill="#1E78E0" stroke="#0A3A90" stroke-width="0.5"/><rect x="6.5" y="2.5" width="3" height="3" fill="#1E78E0" stroke="#0A3A90" stroke-width="0.5"/></svg>
<svg class="a" style="left:1233px;top:328px" width="16" height="16" viewBox="0 0 16 16"><path d="M2 8 Q3 3 9 4 Q15 5 14 9 Q13 12 8 12" stroke="#101010" stroke-width="1.2" fill="#C8D8F0"/><rect x="0.5" y="6.5" width="3" height="3" fill="#1E78E0" stroke="#0A3A90" stroke-width="0.5"/><rect x="6.5" y="10.5" width="3" height="3" fill="#1E78E0" stroke="#0A3A90" stroke-width="0.5"/></svg>
<svg class="a" style="left:1233px;top:350px" width="16" height="16" viewBox="0 0 16 16"><path d="M7 1 H13 L15 3 V13 H7z" fill="#C8D8E8" stroke="#2A4E98" stroke-width="0.8"/><rect x="2" y="5" width="8" height="6" fill="#F0E080" stroke="#2A4E98"/><circle cx="10" cy="12" r="3.5" fill="#E0D070" stroke="#2A4E98"/><path d="M12 16 L16 12 V16z" fill="#000"/><rect x="0.5" y="9.5" width="3" height="3" fill="#1E78E0" stroke="#0A3A90" stroke-width="0.5"/></svg>
<svg class="a" style="left:1233px;top:372px" width="16" height="16" viewBox="0 0 16 16"><rect x="3" y="2" width="8" height="6" fill="#F0E080" stroke="#2A4E98"/><circle cx="10" cy="10" r="4" fill="#E0D070" stroke="#2A4E98"/><rect x="1.5" y="6.5" width="3" height="3" fill="#1E78E0" stroke="#0A3A90" stroke-width="0.5"/></svg>
<svg class="a" style="left:1233px;top:394px" width="16" height="16" viewBox="0 0 16 16"><rect x="6.75" y="6.75" width="2.5" height="2.5" fill="#1E78E0" stroke="#0A3A90" stroke-width="0.5"/></svg>
<svg class="a" style="left:1233px;top:416px" width="16" height="16" viewBox="0 0 16 16"><rect x="3" y="3" width="10" height="10" fill="#E8EEF4"/><path d="M3 7 L7 3 M3 11 L11 3 M5 13 L13 5 M9 13 L13 9" stroke="#5A6A8A" stroke-width="1.1"/><path d="M3 0 V16 M13 0 V16 M0 3 H16 M0 13 H16" stroke="#1E4A8A" stroke-width="1.6"/></svg>
<svg class="a" style="left:1233px;top:438px" width="16" height="16" viewBox="0 0 16 16"><defs><linearGradient id="gG" x1="0" y1="0" x2="1" y2="1"><stop offset="0" stop-color="#1A2A5A"/><stop offset="1" stop-color="#E8D060"/></linearGradient></defs><rect x="3" y="3" width="10" height="10" fill="url(#gG)"/><path d="M3 0 V16 M13 0 V16 M0 3 H16 M0 13 H16" stroke="#1A1A2A" stroke-width="1.6"/></svg>
<svg class="a" style="left:1233px;top:460px" width="16" height="16" viewBox="0 0 16 16"><path d="M1.5 2.5 H10 L14.5 7 V13.5 H1.5z" fill="#C8D8F0" stroke="#2A4E98" stroke-width="1.2"/><circle cx="8" cy="8.5" r="2.8" fill="#fff" stroke="#2A4E98" stroke-width="1.1"/></svg>
<svg class="a" style="left:1233px;top:482px" width="16" height="16" viewBox="0 0 16 16"><rect x="1.5" y="2.5" width="13" height="11" fill="#DCE8F8" stroke="#3A68C0"/><rect x="2" y="3" width="12" height="3" fill="#5080D0"/><path d="M1.5 9 H14.5 M1.5 11.5 H14.5 M6 6 V13.5 M10 6 V13.5" stroke="#6A90D0"/></svg>
<svg class="a" style="left:1233px;top:504px" width="16" height="16" viewBox="0 0 16 16"><path d="M2 15 L7 1 H9 L14 15 M4.5 10 H11.5" stroke="#101010" stroke-width="1.7" fill="none"/></svg>
<svg class="a" style="left:1259px;top:108px" width="16" height="16" viewBox="0 0 16 16"><path d="M4 14 L14 3 L16 5 L7 15z" fill="#F0C830" stroke="#806000" stroke-width="0.6"/><path d="M2 13 L6 9 L9 12 L5 15z" fill="#E05050" stroke="#602020" stroke-width="0.6"/><path d="M6 9 L8 7 L11 10 L9 12z" fill="#40C0B0"/><path d="M0 15 H16" stroke="#202020"/></svg>
<svg class="a" style="left:1259px;top:130px" width="16" height="16" viewBox="0 0 16 16"><circle cx="4" cy="4" r="3" fill="#C8D8F0" stroke="#101010" stroke-width="1.1"/><circle cx="9" cy="11" r="3" fill="#C8D8F0" stroke="#101010" stroke-width="1.1"/><circle cx="12" cy="13" r="3" fill="#C8D8F0" stroke="#101010" stroke-width="1.1"/><path d="M7 3 Q12 0 13 5" stroke="#1E3E78" stroke-width="1.6" fill="none"/><path d="M10 5 L15 5 L13 8z" fill="#1E3E78"/></svg>
<svg class="a" style="left:1259px;top:152px" width="16" height="16" viewBox="0 0 16 16"><path d="M6.5 3 L1.5 13.5 H6.5z M9.5 3 L14.5 13.5 H9.5z" fill="#fff" stroke="#101010" stroke-width="1.1"/><path d="M8 0 V16" stroke="#1E64C8" stroke-width="1.3"/></svg>
<svg class="a" style="left:1259px;top:174px" width="16" height="16" viewBox="0 0 16 16"><path d="M2 13 V8 Q2 5 5 5 Q5 1 8 1 Q11 1 11 5 V8 H14 V13z" fill="#fff" stroke="#101010" stroke-width="1.2"/><path d="M4 11 V9 Q4 7 6.5 7 V4 Q8 3 9 4 V10 H13" stroke="#1E64C8" stroke-width="1.2" fill="none"/></svg>
<svg class="a" style="left:1259px;top:196px" width="16" height="16" viewBox="0 0 16 16"><rect x="1.5" y="1.5" width="5" height="5" fill="#fff" stroke="#101010" stroke-width="1.2"/><rect x="9.5" y="1.5" width="5" height="5" fill="#fff" stroke="#101010" stroke-width="1.2"/><rect x="1.5" y="9.5" width="5" height="5" fill="#fff" stroke="#101010" stroke-width="1.2"/><rect x="9.5" y="9.5" width="5" height="5" fill="#fff" stroke="#101010" stroke-width="1.2"/></svg>
<svg class="a" style="left:1259px;top:218px" width="16" height="16" viewBox="0 0 16 16"><path d="M8 1 V15 M1 8 H15" stroke="#3A6A9C" stroke-width="2"/><path d="M8 0 L4.5 4 H11.5z M8 16 L4.5 12 H11.5z M0 8 L4 4.5 V11.5z M16 8 L12 4.5 V11.5z" fill="#3A6A9C"/></svg>
<svg class="a" style="left:1259px;top:240px" width="16" height="16" viewBox="0 0 16 16"><path d="M5.5 3.2 A6 6 0 1 0 11.5 3.4" stroke="#3A6A9C" stroke-width="2.2" fill="none"/><path d="M3 0 L9 3 L4 7z" fill="#3A6A9C"/></svg>
<svg class="a" style="left:1259px;top:262px" width="16" height="16" viewBox="0 0 16 16"><rect x="1.5" y="1.5" width="13" height="13" fill="#DCE6F0" stroke="#3A6A9C" stroke-width="1"/><rect x="1.5" y="7.5" width="7" height="7" fill="none" stroke="#101010" stroke-dasharray="1 1"/></svg>
<svg class="a" style="left:1259px;top:284px" width="16" height="16" viewBox="0 0 16 16"><path d="M1.5 1.5 H8.5 L14.5 14.5 H1.5z" fill="#C8D8F0" stroke="#101010" stroke-width="1.1"/><path d="M5.5 1.5 V14.5" stroke="#101010" stroke-dasharray="1 1"/><rect x="2" y="2" width="3" height="12" fill="#fff"/></svg>
<svg class="a" style="left:1259px;top:306px" width="16" height="16" viewBox="0 0 16 16"><path d="M0 8 H5" stroke="#101010" stroke-width="1.3"/><path d="M9 8 H16" stroke="#1E64C8" stroke-width="1.3" stroke-dasharray="2 1"/><path d="M5 14 L10 2" stroke="#1E64C8" stroke-width="1.3"/></svg>
<svg class="a" style="left:1259px;top:328px" width="16" height="16" viewBox="0 0 16 16"><path d="M0 8 H5" stroke="#101010" stroke-width="1.3"/><path d="M5 8 H10" stroke="#1E64C8" stroke-width="1.3" stroke-dasharray="2 1"/><path d="M9 14 L14 2" stroke="#1E64C8" stroke-width="1.3"/></svg>
<svg class="a" style="left:1259px;top:350px" width="16" height="16" viewBox="0 0 16 16"><rect x="1.5" y="4.5" width="14" height="10" fill="#DCE6F0" stroke="#101010" stroke-width="1.5"/><rect x="9.0" y="2.5" width="3" height="3" fill="#1E78E0" stroke="#0A3A90" stroke-width="0.5"/></svg>
<svg class="a" style="left:1259px;top:372px" width="16" height="16" viewBox="0 0 16 16"><rect x="1.5" y="4.5" width="14" height="10" fill="#DCE6F0" stroke="#101010" stroke-width="1.5"/><rect x="2.5" y="2.5" width="3" height="3" fill="#1E78E0" stroke="#0A3A90" stroke-width="0.5"/><rect x="10.5" y="2.5" width="3" height="3" fill="#1E78E0" stroke="#0A3A90" stroke-width="0.5"/></svg>
<svg class="a" style="left:1259px;top:394px" width="16" height="16" viewBox="0 0 16 16"><path d="M0 8 H16" stroke="#1A2A5A" stroke-width="1.5"/><path d="M3 4 L7 8 L3 12z M13 4 L9 8 L13 12z" fill="#1A2A5A"/></svg>
<svg class="a" style="left:1259px;top:416px" width="16" height="16" viewBox="0 0 16 16"><path d="M1.5 8 V1.5 H9" stroke="#101010" stroke-width="1.2" fill="none" stroke-dasharray="1 1"/><path d="M1.5 16 V8 M9 1.5 H16" stroke="#101010" stroke-width="1.3" fill="none"/><path d="M1.5 8 L9 1.5" stroke="#1E64C8" stroke-width="1.5"/></svg>
<svg class="a" style="left:1259px;top:438px" width="16" height="16" viewBox="0 0 16 16"><path d="M1.5 8 V1.5 H9" stroke="#101010" stroke-width="1.2" fill="none" stroke-dasharray="1 1"/><path d="M1.5 16 V9 M9 1.5 H16" stroke="#101010" stroke-width="1.3" fill="none"/><path d="M1.5 10 Q1.5 1.5 11 1.5" stroke="#1E64C8" stroke-width="1.6" fill="none"/></svg>
<svg class="a" style="left:1259px;top:460px" width="16" height="16" viewBox="0 0 16 16"><path d="M1 15 L9 7" stroke="#C02020" stroke-width="3"/><path d="M2 13 L5 10" stroke="#F0D020" stroke-width="1.5"/><path d="M10 2 L11 5 L14 4 L12 7 L15 9 L11 9 L10 12 L9 8 L6 7 L9 6z" fill="#F8E040" stroke="#C06000" stroke-width="0.6"/></svg>
<svg class="a" style="left:1259px;top:500px" width="16" height="16" viewBox="0 0 16 16"><rect x="0.5" y="0.5" width="8" height="6" fill="#D8E4EE" stroke="#3A6A9A"/><rect x="3.5" y="3.5" width="9" height="9" fill="#5A84B4" stroke="#2A4E7E"/><rect x="7.5" y="9.5" width="8" height="6" fill="#D8E4EE" stroke="#3A6A9A"/></svg>
<svg class="a" style="left:1259px;top:522px" width="16" height="16" viewBox="0 0 16 16"><rect x="3.5" y="3.5" width="9" height="9" fill="#5A84B4" stroke="#2A4E7E"/><rect x="0.5" y="0.5" width="8" height="6" fill="#D8E4EE" stroke="#3A6A9A"/><rect x="7.5" y="9.5" width="8" height="6" fill="#D8E4EE" stroke="#3A6A9A"/></svg>
<svg class="a" style="left:1259px;top:544px" width="16" height="16" viewBox="0 0 16 16"><rect x="5.5" y="5.5" width="10" height="9" fill="#D8E4EE" stroke="#3A6A9A"/><rect x="1.5" y="1.5" width="11" height="10" fill="#5A84B4" stroke="#2A4E7E"/></svg>
<svg class="a" style="left:1259px;top:566px" width="16" height="16" viewBox="0 0 16 16"><rect x="1.5" y="1.5" width="11" height="10" fill="#5A84B4" stroke="#2A4E7E"/><rect x="5.5" y="5.5" width="10" height="9" fill="#D8E4EE" stroke="#3A6A9A"/></svg>
</body></html>
